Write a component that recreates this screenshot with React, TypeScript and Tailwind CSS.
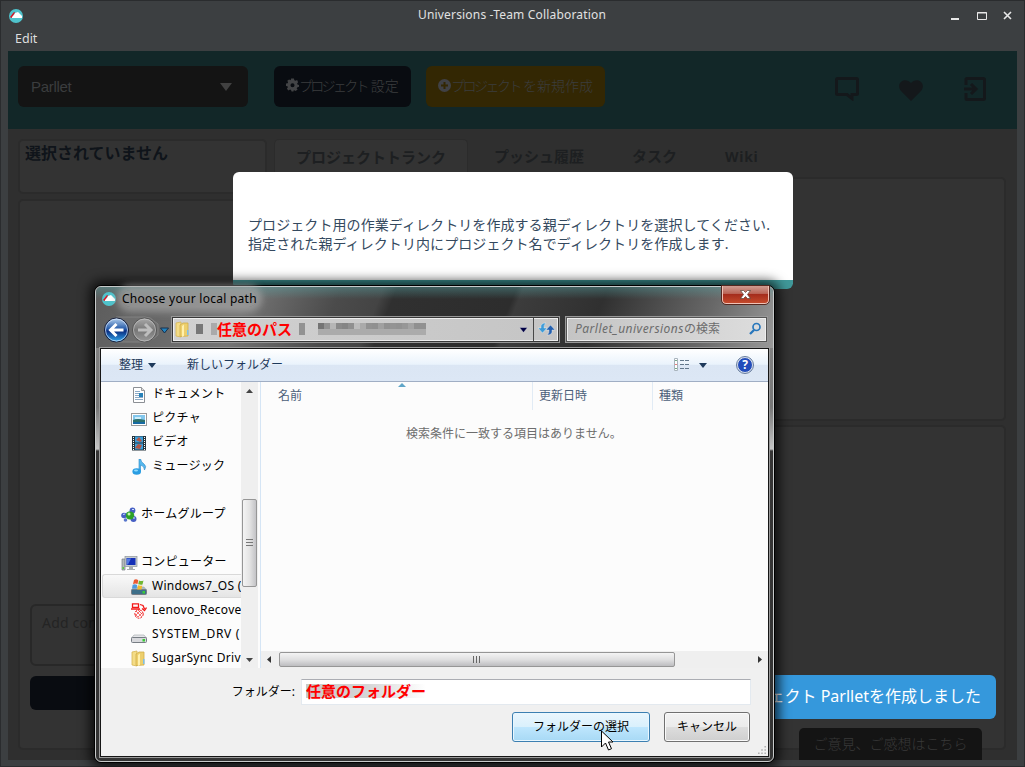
import type { ReactNode } from "react";

const ui = "font-['Noto_Sans','Noto_Sans_CJK_JP',sans-serif]";

function AppLogo() {
  return (
    <svg width="14" height="14" viewBox="0 0 14 14" className="shrink-0">
      <circle cx="7" cy="7" r="7" fill="#4fc3cc" />
      <path d="M3 9 L3 7 L5 6 L6 4 L9 3 L11 5 L13 7 L13 9 Z" fill="#fff" />
      <path d="M1 8 L5 3 L6 3.500 L2.500 9 Z" fill="#e01020" />
    </svg>
  );
}

function Folder() {
  return (
    <svg width="15" height="17" viewBox="0 0 15 17" className="shrink-0">
      <path d="M1 2 L6 1 L6 16 L1 15 Z" fill="#f4dc86" stroke="#d7b654" strokeWidth=".8" />
      <path d="M5 4 L8 2 L13 2 L13 15 L5 15.500 Z" fill="#edcf6c" stroke="#d1ad49" strokeWidth=".8" />
      <path d="M7 5 L9 3.500 L9 15 L7 16 Z" fill="#fff0ad" />
      <path d="M12 9h1.500v5H12z" fill="#7ec0e8" />
    </svg>
  );
}

function DocIcon() {
  return (
    <svg width="16" height="16" viewBox="0 0 16 16">
      <path d="M2.500 .5h8l3 3v12h-11z" fill="#fff" stroke="#8b8f94" />
      <path d="M10.500 .5v3h3" fill="#ddd" stroke="#999" />
      <path d="M4 4.500h5M4 6.500h4M4 8.500h4M4 10.500h8M4 12.500h8" stroke="#8cabc7" />
      <rect x="8" y="6" width="4" height="4" fill="#2782b9" />
    </svg>
  );
}

function PictureIcon() {
  return (
    <svg width="16" height="16" viewBox="0 0 16 16">
      <rect x=".5" y="2.500" width="15" height="12" fill="#fff" stroke="#9a9a9a" />
      <rect x="2" y="4" width="12" height="9" fill="#83c7ed" />
      <path d="M2 9q4-2 12 0v4H2z" fill="#2e716c" />
      <path d="M2 11h12v2H2z" fill="#176aa2" />
      <path d="M4 7h6" stroke="#e9fbff" strokeWidth="1.500" />
    </svg>
  );
}

function VideoIcon() {
  return (
    <svg width="16" height="16" viewBox="0 0 16 16">
      <rect x="1" y="1" width="14" height="14.500" fill="#26343c" />
      <rect x="4" y="1.500" width="8" height="6" fill="#3c9fdb" />
      <rect x="4" y="8.500" width="8" height="6" fill="#3c9fdb" />
      <path d="M5 5l3-3 3 4-2 1zM4 13l3-4 4 1-2 4z" fill="#b35746" />
      <path d="M2.500 2v13M13.500 2v13" stroke="#fff" strokeDasharray="1 1" />
    </svg>
  );
}

function MusicIcon() {
  return (
    <svg width="16" height="16" viewBox="0 0 16 16">
      <path d="M8 12V0h1.500q.5 3 3.500 5t.5 6q0-4-4-5V12z" fill="#56b8ed" stroke="#2686c6" strokeWidth=".6" />
      <ellipse cx="5.700" cy="12.500" rx="4.300" ry="3.200" fill="#2a9de2" />
      <ellipse cx="5" cy="11.500" rx="2" ry="1" fill="#90dcff" />
    </svg>
  );
}

function HomegroupIcon() {
  return (
    <svg width="16" height="16" viewBox="0 0 16 16">
      <path d="M3 8L12 3L13 12Z" fill="none" stroke="#91bce4" strokeWidth="1.500" />
      <circle cx="3" cy="8.500" r="2.800" fill="#465fc4" />
      <circle cx="11.500" cy="3.500" r="2.900" fill="#465fc4" />
      <circle cx="12.500" cy="12" r="3" fill="#465fc4" />
      <circle cx="9" cy="8.500" r="4.100" fill="#2da128" />
      <circle cx="8" cy="7" r="1.500" fill="#c3f4ad" />
      <circle cx="4.500" cy="13" r="1.800" fill="#5a78cc" />
      <path d="M2 7.500l2-.5M11 2.500l2 0M12 11l2 0" stroke="#cadcff" />
    </svg>
  );
}

function ComputerIcon() {
  return (
    <svg width="17" height="16" viewBox="0 0 17 16">
      <path d="M1 4h3v11H1z" fill="#b4b9ba" stroke="#7a8084" strokeWidth=".7" />
      <path d="M1.500 12h1.500v2H1.500z" fill="#59d13e" />
      <rect x="4" y="1.500" width="12" height="10" fill="#c7cdd1" stroke="#8d949a" strokeWidth=".7" />
      <rect x="5.500" y="3" width="9" height="7" fill="#1530b7" />
      <path d="M6 3.500l4 0-3 6H6z" fill="#557ce3" />
      <path d="M8 12h4v2h2v1H6v-1h2z" fill="#a7adb1" />
    </svg>
  );
}

function DriveIcon({ windows = false }: { windows?: boolean }) {
  return (
    <svg width="16" height="16" viewBox="0 0 16 16">
      <path d="M3 8h10l2.500 3H.5z" fill={windows ? "#a9bcc8" : "#e6e7ea"} stroke="#a0a6aa" strokeWidth=".6" />
      <rect x=".5" y="10.500" width="15" height="5" rx="1" fill={windows ? "#3d6f89" : "#d8d9dd"} stroke="#777d84" />
      <rect x="11.500" y="12" width="2.500" height="2.500" fill="#39cb37" />
      {windows && (
        <>
          <path d="M3 1q2-1.500 4.300.3L6.500 5Q4.500 4 2 5z" fill="#eb5932" />
          <path d="M8 1.500q2 1 4.500 0L11.500 5.500Q10 6 7.200 5.300z" fill="#70b632" />
          <path d="M1.700 5.700q2-1 4.500.2L5.500 9.500 1 9.500z" fill="#4b9ae1" />
          <path d="M7 6.200q2 .8 4.300.3L10.500 10.500H6.200z" fill="#f2bb2c" />
        </>
      )}
    </svg>
  );
}

function RecoveryIcon() {
  return (
    <svg width="16" height="16" viewBox="0 0 16 16" fill="none" stroke="#f31717">
      <path d="M1.500 .8h6v3.500h-6zM0 6h9M9 1.500l3 1 1.500 3.500M11 5.500l2.500 2 2-3" strokeWidth="1.300" />
      <circle cx="8" cy="11" r="4.200" strokeDasharray="2 1" />
      <path d="M5 8l6 6M7 7l4 4M4 11l3 3M10 7l-6 6M12 9l-5 5" strokeWidth=".6" />
    </svg>
  );
}

function Item({ icon, label, root = false, selected = false }: { icon: ReactNode; label: string; root?: boolean; selected?: boolean }) {
  return (
    <div
      className={
        "flex h-6 shrink-0 items-center overflow-hidden whitespace-nowrap text-[12px] text-black " +
        (root ? "pl-[19px] " : selected ? "pl-7 " : "pl-[29px] ") +
        (selected ? "rounded-l-[3px] border border-r-0 border-[#d9d9d9] bg-linear-to-b from-[#f9f9f9] to-[#e5e5e5]" : "")
      }
    >
      <span className="mt-px flex w-[17px] shrink-0">{icon}</span>
      <span className={root ? "ml-[3px] leading-6" : "ml-1 leading-6"}>{label}</span>
    </div>
  );
}

function WindowTitle() {
  return (
    <>
      <div className="flex h-[29px] items-center justify-between pl-2 pr-2.5">
        <div className="flex w-[90px]"><AppLogo /></div>
        <span className="-mt-0.5 ml-px text-[12px] tracking-[0.180px] text-[#e1e1e1]">Universions -Team Collaboration</span>
        <svg width="90" height="14" viewBox="0 0 90 14" fill="none" stroke="#e8e8e8">
          <path d="M27 10h8" strokeWidth="2" />
          <path d="M53.500 4v6.500h9V3.500h-9zM53 4h10" />
          <path d="M80 3l7 7M87 3l-7 7" strokeWidth="1.600" />
        </svg>
      </div>
      <div className="-mt-px mb-px flex h-[21px] items-center pl-3.5 text-[12.500px] text-[#dedede]">Edit</div>
    </>
  );
}

function Header() {
  return (
    <div className="flex h-[78px] shrink-0 items-start bg-[#122728] pt-[15px] pl-2.5 text-[#3b3d3e]">
      <div className="flex h-[41px] w-[230px] items-center justify-between rounded-md bg-[#141414] pr-4 pl-[13px] font-['Liberation_Sans',sans-serif] text-[15px]">
        <span className="mt-px tracking-[-0.300px]">Parllet</span>
        <svg width="12" height="8" viewBox="0 0 12 8"><path d="M0 0h12L6 8z" fill="#414141" /></svg>
      </div>
      <div className="ml-[26px] flex h-[41px] w-[137px] items-center whitespace-nowrap rounded-md bg-[#090c11] pb-[3px] pl-3 text-[14px] font-light">
        <svg width="13" height="14" viewBox="0 0 14 14" className="shrink-0">
          <path fillRule="evenodd" fill="#434446" d="M5.500 0h3l.5 2 1.200.5L12 1.500 13 4l-1 1.500.3 1L14 7v2l-2 .6-.5 1L12.500 12 10 13.500l-1.500-1-.5 1.500H6l-.6-1.700-1-.4L2.600 13 1 11l1-1.700-.4-1L0 8V5.500L1.800 5l.4-1L1.400 2.300 3.300 1l1.700.9zM7 5a2.200 2.200 0 1 0 0 4.400A2.200 2.200 0 0 0 7 5z" />
        </svg>
        <span className="tracking-[-2.700px]">プロジェクト</span><span className="ml-1">設定</span>
      </div>
      <div className="ml-[15px] flex h-[41px] w-[179px] items-center whitespace-nowrap rounded-md bg-[#332703] pb-[3px] pl-3 text-[14px] font-light">
        <svg width="13" height="13" viewBox="0 0 13 13" className="shrink-0"><circle cx="6.500" cy="6.500" r="6.500" fill="#404145" /><path d="M6.500 3v7M3 6.500h7" stroke="#332703" strokeWidth="2" /></svg>
        <span className="tracking-[-2.500px]">プロジェクト</span><span className="ml-[3px]">を新規作成</span>
      </div>
      <div className="mt-[11px] ml-auto flex items-start gap-10 pr-[30px]">
        <svg width="24" height="24" viewBox="0 0 24 24" fill="none" stroke="#14181b"><path d="M2.500 1.500h19a1 1 0 0 1 1 1v14a1 1 0 0 1-1 1H17v4l-5-4H2.500a1 1 0 0 1-1-1v-14a1 1 0 0 1 1-1z" strokeWidth="3" /></svg>
        <svg width="24" height="24" viewBox="0 0 24 24"><path d="M12 24L2 14C-4 6 6-1 12 6c6-7 16 0 10 8z" fill="#14181b" /></svg>
        <svg width="24" height="24" viewBox="0 0 24 24" fill="none" stroke="#14181b" strokeWidth="3"><path d="M3 8V2.500q0-1 1-1h16q1.500 0 1.500 1v19q0 1-1.500 1H4q-1 0-1-1V16M1 12h12M8 7l5 5-5 5" /></svg>
      </div>
    </div>
  );
}

function Workspace() {
  return (
    <div className="flex min-h-0 flex-1 bg-[#2f2f2f] pt-2.5 pr-[11px] pb-2.5 pl-2.5">
      <div className="flex w-[249px] shrink-0 flex-col">
        <div className="h-[55px] rounded-[5px] border-2 border-[#2b2b2b] bg-[#333] pl-[5px] text-[16px] leading-6 font-bold text-[#0f141a]">
          選択されていません
        </div>
        <div className="mt-[5px] flex flex-1 flex-col rounded-[5px] border-2 border-[#2b2b2b] bg-[#333] px-2.5 pb-[38px]">
          <div className="mt-auto h-[62px] rounded-md border-2 border-[#282828] pt-1.5 pl-2.5 text-[14px] tracking-[0.200px] text-[#242424]">Add comment</div>
          <div className="mt-2.5 h-[34px] rounded-md bg-[#090c11]" />
        </div>
      </div>
      <div className="ml-[7px] flex flex-1 flex-col">
        <div className="flex h-[38px] items-center text-[15px] font-bold whitespace-nowrap text-[#1d1f21]">
          <div className="flex h-full w-[194px] items-center justify-center rounded-t-[5px] border border-b-0 border-[#2b2b2b] bg-[#333] pb-[3px]">プロジェクトトランク</div>
          <div className="ml-[26px] pb-[3px]">プッシュ履歴</div>
          <div className="ml-12 pb-[3px]">タスク</div>
          <div className="ml-12 pb-1 text-[14px] tracking-[0.700px]">Wiki</div>
        </div>
        <div className="h-[244px] rounded-[5px] border-2 border-[#2b2b2b] bg-[#333]" />
        <div className="mt-1 flex-1 rounded-[5px] border-2 border-[#2b2b2b] bg-[#333]" />
      </div>
    </div>
  );
}

const pixels = ["#747474", "#929292", "#b6b6b6", "#8a8a8a", "#858585", "#909090", "#bcbcbc", "#aaa", "#929292", "#909090", "#a0a0a0", "#919191", "#949494", "#929292", "#979797", "#a3a3a3", "#909090", "#919191"];

function AddressBar() {
  return (
    <div className="flex h-[38px] items-center pl-2 pr-1.5">
      <svg width="66" height="30" viewBox="0 0 66 30" className="mt-0.5 mr-0.5 shrink-0">
        <defs>
          <linearGradient id="back" x2="0" y2="1"><stop stopColor="#b6d2ef" /><stop offset=".45" stopColor="#265ba9" /><stop offset=".55" stopColor="#0b2f83" /><stop offset="1" stopColor="#32abef" /></linearGradient>
          <linearGradient id="forward" x2="0" y2="1"><stop stopColor="#aaa" /><stop offset=".5" stopColor="#777" /><stop offset="1" stopColor="#999" /></linearGradient>
        </defs>
        <path d="M12 2h29q6 0 9 4l4 3v11l-5 4-8 3H12" fill="#777" stroke="#999" opacity=".55" />
        <circle cx="12.500" cy="15" r="12" fill="url(#back)" stroke="#151d38" />
        <circle cx="12.500" cy="15" r="11" fill="none" stroke="#dceaff" opacity=".7" />
        <path d="M19.500 15h-13M12.500 9l-6 6 6 6" fill="none" stroke="#fff" strokeWidth="3" />
        <circle cx="40.500" cy="15" r="12" fill="url(#forward)" stroke="#555" />
        <circle cx="40.500" cy="15" r="11" fill="none" stroke="#ccc" opacity=".6" />
        <path d="M34 15h12M41 9l6 6-6 6" fill="none" stroke="#bdbdbd" strokeWidth="3" />
        <path d="M56.500 13h8l-4 5z" fill="#2383bf" stroke="#18314c" />
      </svg>
      <div className="flex h-[25px] w-[387px] shrink-0 items-center border border-[#383838] bg-linear-to-r from-[#d1d1d1] to-[#c5c5c5] outline-1 outline-[#979797] ring-1 ring-[#eee] ring-inset">
        <div className="flex w-full items-center pl-0.5">
          <Folder />
          <div className="ml-1.5 flex w-[21px] items-center"><div className="h-2.5 w-2 bg-[#777]" /><div className="ml-2 h-3 w-1.5 bg-[#aaa]" /></div>
          <span className="w-[75px] text-[15px] leading-[22px] font-bold text-[#f00]">任意のパス</span>
          <div className="ml-[7px] h-3 w-1.5 bg-[#929292]" />
          <div className="ml-[13px] flex">
            {pixels.map((c, i) => <div key={i} className="flex h-3 w-1.5 flex-col" style={{ backgroundColor: c }}><div className="mt-1.5 h-1.5 bg-[#ababab]" /></div>)}
          </div>
          <svg width="9" height="6" viewBox="0 0 9 6" className="mt-0.5 mr-[5px] ml-auto"><path d="M.5.5h8L4.500 5.500z" fill="#000044" stroke="#eee" strokeWidth=".4" /></svg>
          <div className="flex h-[23px] w-[25px] items-center justify-center border-l border-[#484848]">
            <svg width="17" height="14" viewBox="0 0 17 14">
              <path d="M8 1Q2 1 3 6H0l4.500 5L9 6H6Q5.500 3 8 1z" fill="#3d9bd8" stroke="#f2f7fa" strokeWidth=".4" />
              <path d="M9 13q6 0 5-5h3l-4.500-5L8 8h3q.5 3-2 5z" fill="#235fae" stroke="#f2f7fa" strokeWidth=".4" />
            </svg>
          </div>
        </div>
      </div>
      <div className="ml-[7px] flex h-[25px] flex-1 items-center justify-between border border-[#555] bg-linear-to-r from-[#c4c4c4] to-[#ddd] pr-1 pl-2 outline-1 outline-[#999] ring-1 ring-[#eee] ring-inset">
        <span className="text-[12px] whitespace-nowrap text-[#6c6c6c]"><i className="tracking-[0.480px]">Parllet_universions</i>の検索</span>
        <svg width="14" height="14" viewBox="0 0 14 14" fill="none" stroke="#2877bc"><circle cx="8.500" cy="5" r="3.500" strokeWidth="1.700" /><path d="M6 8l-4 4" strokeWidth="2.300" /></svg>
      </div>
    </div>
  );
}

function Toolbar() {
  return (
    <div className="flex h-[33px] shrink-0 items-center border-b border-[#a0aec4] bg-[linear-gradient(#fff_0%,#eaf3fc_48%,#dbe6f4_50%,#dce7f5_100%)] pl-[18px] text-[12px] whitespace-nowrap text-[#1e395b]">
      <span>整理</span>
      <svg width="8" height="5" viewBox="0 0 8 5" className="ml-[5px]"><path d="M0 0h8L4 5z" fill="#1e395b" /></svg>
      <span className="ml-[31px]">新しいフォルダー</span>
      <svg width="15" height="13" viewBox="0 0 15 13" className="-mt-0.5 ml-auto">
        <path d="M.5.5h3v12h-3z" fill="#fff" stroke="#a9b4bd" /><path d="M2 2v1M2 10v1" stroke="#4a8d63" strokeWidth="1.500" /><path d="M2 6v1" stroke="#d55" strokeWidth="1.500" />
        <path d="M6 2.500h4M11 2.500h4M6 6.500h4M11 6.500h4M6 10.500h4M11 10.500h4" stroke="#63788c" />
      </svg>
      <svg width="8" height="5" viewBox="0 0 8 5" className="ml-2.5"><path d="M0 0h8L4 5z" fill="#1e395b" /></svg>
      <div className="mr-[15px] ml-[30px] flex size-4 items-center justify-center rounded-full border border-[#dae0ed] bg-[#234dbb] text-[12px] leading-none font-bold text-white outline-1 outline-[#667c9d]">?</div>
    </div>
  );
}

function Sidebar() {
  return (
    <div className="flex w-[160px] shrink-0 border-r border-[#d5e5f5]">
      <div className="flex w-[141px] flex-col overflow-hidden pl-px tracking-[0.270px]">
        <Item icon={<DocIcon />} label="ドキュメント" />
        <Item icon={<PictureIcon />} label="ピクチャ" />
        <Item icon={<VideoIcon />} label="ビデオ" />
        <Item icon={<MusicIcon />} label="ミュージック" />
        <div className="h-6 shrink-0" />
        <Item root icon={<HomegroupIcon />} label="ホームグループ" />
        <div className="h-6 shrink-0" />
        <Item root icon={<ComputerIcon />} label="コンピューター" />
        <Item selected icon={<DriveIcon windows />} label="Windows7_OS (" />
        <Item icon={<RecoveryIcon />} label="Lenovo_Recove" />
        <div className="flex flex-col tracking-[0.700px]"><Item icon={<DriveIcon />} label="SYSTEM_DRV (" /></div>
        <Item icon={<Folder />} label="SugarSync Driv" />
      </div>
      <div className="-ml-px flex w-[17px] flex-col items-center bg-[#efefef] pr-px">
        <svg width="7" height="4" viewBox="0 0 7 4" className="mt-[7px] shrink-0"><path d="M0 4h7L3.500 0z" fill="#444" /></svg>
        <div className="mt-[106px] flex h-[88px] w-[15px] shrink-0 items-center justify-center rounded-[2px] border border-[#969696] bg-linear-to-r from-[#f4f4f4] via-[#e4e4e4] to-[#c3c3c6]">
          <svg width="7" height="8" viewBox="0 0 7 8" stroke="#777"><path d="M0 .5h7M0 3.500h7M0 6.500h7" /></svg>
        </div>
        <svg width="7" height="4" viewBox="0 0 7 4" className="mt-auto mb-1.5"><path d="M0 0h7L3.500 4z" fill="#444" /></svg>
      </div>
    </div>
  );
}

function FileList() {
  return (
    <div className="flex flex-1 flex-col">
      <div className="relative flex h-7 text-[12px] leading-7 text-[#4c607a]">
        <div className="w-[272px] border-r border-[#e1ebf5] pl-[17px]">名前</div>
        <div className="w-[120px] border-r border-[#e1ebf5] pl-1.5">更新日時</div>
        <div className="pl-1.5">種類</div>
        <svg width="8" height="4" viewBox="0 0 8 4" className="absolute top-px left-[137px]"><path d="M0 4l4-4 4 4z" fill="#5fa5c8" /></svg>
      </div>
      <div className="flex-1 pt-[15px] pl-[145px] text-[12px] text-[#6d6d6d]">検索条件に一致する項目はありません。</div>
      <div className="flex h-[17px] items-center bg-[#efefef] pr-1.5 pl-1.5">
        <svg width="4" height="7" viewBox="0 0 4 7"><path d="M4 0v7L0 3.500z" fill="#333" /></svg>
        <div className="ml-2 flex h-[15px] w-[396px] items-center justify-center rounded-[2px] border border-[#969696] bg-linear-to-b from-[#f4f4f4] via-[#e0e0e1] to-[#bdbdc0]">
          <svg width="8" height="7" viewBox="0 0 8 7" stroke="#666"><path d="M.5 0v7M3.500 0v7M6.500 0v7" /></svg>
        </div>
        <svg width="4" height="7" viewBox="0 0 4 7" className="ml-auto"><path d="M0 0v7l4-3.500z" fill="#333" /></svg>
      </div>
    </div>
  );
}

function Footer() {
  return (
    <div className="relative h-[88px] shrink-0 bg-[#f0f0f0] pt-[11px] pr-[18px] text-[12px] text-black">
      <div className="-mr-px flex h-[26px] items-center justify-end">
        <span className="mr-1.5">フォルダー:</span>
        <div className="flex h-[26px] w-[450px] items-center border border-[#e3e9ef] border-t-[#abadb3] bg-white pb-[3px] pl-1">
          <span className="bg-linear-to-r from-[#c9c9c9] via-[#d5d5d5] to-transparent text-[15px] leading-[14px] font-bold text-[#f00]">任意のフォルダー</span>
        </div>
      </div>
      <div className="mt-[7px] flex justify-end gap-3.5">
        <div className="flex h-[30px] w-[138px] items-center justify-center rounded-[3px] border border-[#3c7fb1] bg-[linear-gradient(#eaf6fd_0%,#d9f0fc_50%,#bee6fd_51%,#a7d9f5_100%)] ring-1 ring-[#e8f7ff] ring-inset">フォルダーの選択</div>
        <div className="flex h-[30px] w-[86px] items-center justify-center rounded-[3px] border border-[#707070] bg-[linear-gradient(#f2f2f2_0%,#ebebeb_50%,#ddd_51%,#cfcfcf_100%)] ring-1 ring-[#fafafa] ring-inset">キャンセル</div>
      </div>
      <svg width="8" height="8" viewBox="0 0 10 10" className="absolute right-0.5 bottom-0.5" fill="#b2b2b2"><path d="M8 0h2v2H8zM4 4h2v2H4zM8 4h2v2H8zM0 8h2v2H0zM4 8h2v2H4zM8 8h2v2H8z" /></svg>
      <svg width="14" height="22" viewBox="0 0 14 22" className="absolute top-[62px] left-[500px]"><path d="M.5 1v16l4-4 3 7 3-1.300-3-6.700H12z" fill="#fff" stroke="#000" /></svg>
    </div>
  );
}

function PathDialog() {
  return (
    <div className="absolute top-[285px] left-[94px] flex h-[478px] w-[681px] flex-col rounded-[7px] border border-black bg-[#333] shadow-[0_0_12px_4px_rgba(0,0,0,0.75)]">
      <div className="flex min-h-0 flex-1 flex-col rounded-[6px] border border-[#c7caca] bg-[linear-gradient(#777_0px,#818181_60px,#777_120px,#c5c5c5_162px,#363535_164px,#343434_100%)]">
        <div className="flex h-[61px] shrink-0 flex-col rounded-t-[5px] bg-[linear-gradient(180deg,rgba(88,170,170,0.4)_0,transparent_12px),linear-gradient(112deg,#5c5c5c_0%,#757575_22%,#4b4b4b_35%,#444_41%,#303030_43%,#2d2d2d_60%,#3c3c3c_61%,#303030_73%,#686868_89%,#999_100%)]">
          <div className="flex h-[23px] items-start pr-1 pl-1.5">
            <div className="flex items-center pt-[3px]">
              <AppLogo />
              <span className="ml-1.5 rounded-full bg-[#a2a2a2]/70 text-[12px] leading-[17px] tracking-[0.270px] text-black shadow-[0_0_7px_5px_rgba(165,165,165,0.7)]">Choose your local path</span>
            </div>
            <div className="-mt-px ml-auto flex h-[18px] w-[47px] items-center justify-center rounded-b-[4px] border border-t-0 border-[#f1c2b6] bg-[linear-gradient(#cf9c91_0%,#ba6557_44%,#a32b1b_47%,#c44a2c_100%)] outline-1 outline-[#552820]">
              <svg width="11" height="9" viewBox="0 0 11 9"><path d="M.5.500h3l2 2 2-2h3L7.500 4.500l3 4h-3l-2-2-2 2h-3l3-4z" fill="#fff" stroke="#543" strokeWidth=".7" /></svg>
            </div>
          </div>
          <AddressBar />
        </div>
        <div className="mx-1 mb-1 flex min-h-0 flex-1 flex-col border border-[#151515] bg-[#fcfcfc] outline-1 outline-[#9a9a9a]">
          <Toolbar />
          <div className="flex min-h-0 flex-1"><Sidebar /><FileList /></div>
          <Footer />
        </div>
      </div>
    </div>
  );
}

export default function App() {
  return (
    <div className={"relative h-[767px] w-[1025px] overflow-hidden " + ui}>
      <div className="flex h-full flex-col border border-[#2a2c2e] bg-[#3c3f41]">
        <WindowTitle />
        <div className="mx-[7px] mb-1.5 flex min-h-0 flex-1 flex-col">
          <Header />
          <Workspace />
        </div>
      </div>
      <div className="absolute top-[172px] left-[233px] h-[117px] w-[560px] rounded-[6px] border-b-[9px] border-[#409899] bg-white pt-[43px] pl-[15px] text-[14px] leading-[19px] tracking-[0.080px] whitespace-nowrap text-[#34495e]">
        <div>プロジェクト用の作業ディレクトリを作成する親ディレクトリを選択してください.</div>
        <div>指定された親ディレクトリ内にプロジェクト名でディレクトリを作成します.</div>
      </div>
      <div className="absolute top-[675px] left-[660px] flex h-11 w-[336px] items-center justify-end rounded-md bg-[#3598dc] pr-[15px] pb-[3px] text-[16px] whitespace-nowrap text-white">プロジェクト Parlletを作成しました</div>
      <div className="absolute top-[728px] left-[799px] flex h-8 w-[183px] items-center justify-center rounded-t-[5px] bg-[#141414] pb-0.5 text-[14px] font-light text-[#393939]">ご意見、ご感想はこちら</div>
      <PathDialog />
    </div>
  );
}
